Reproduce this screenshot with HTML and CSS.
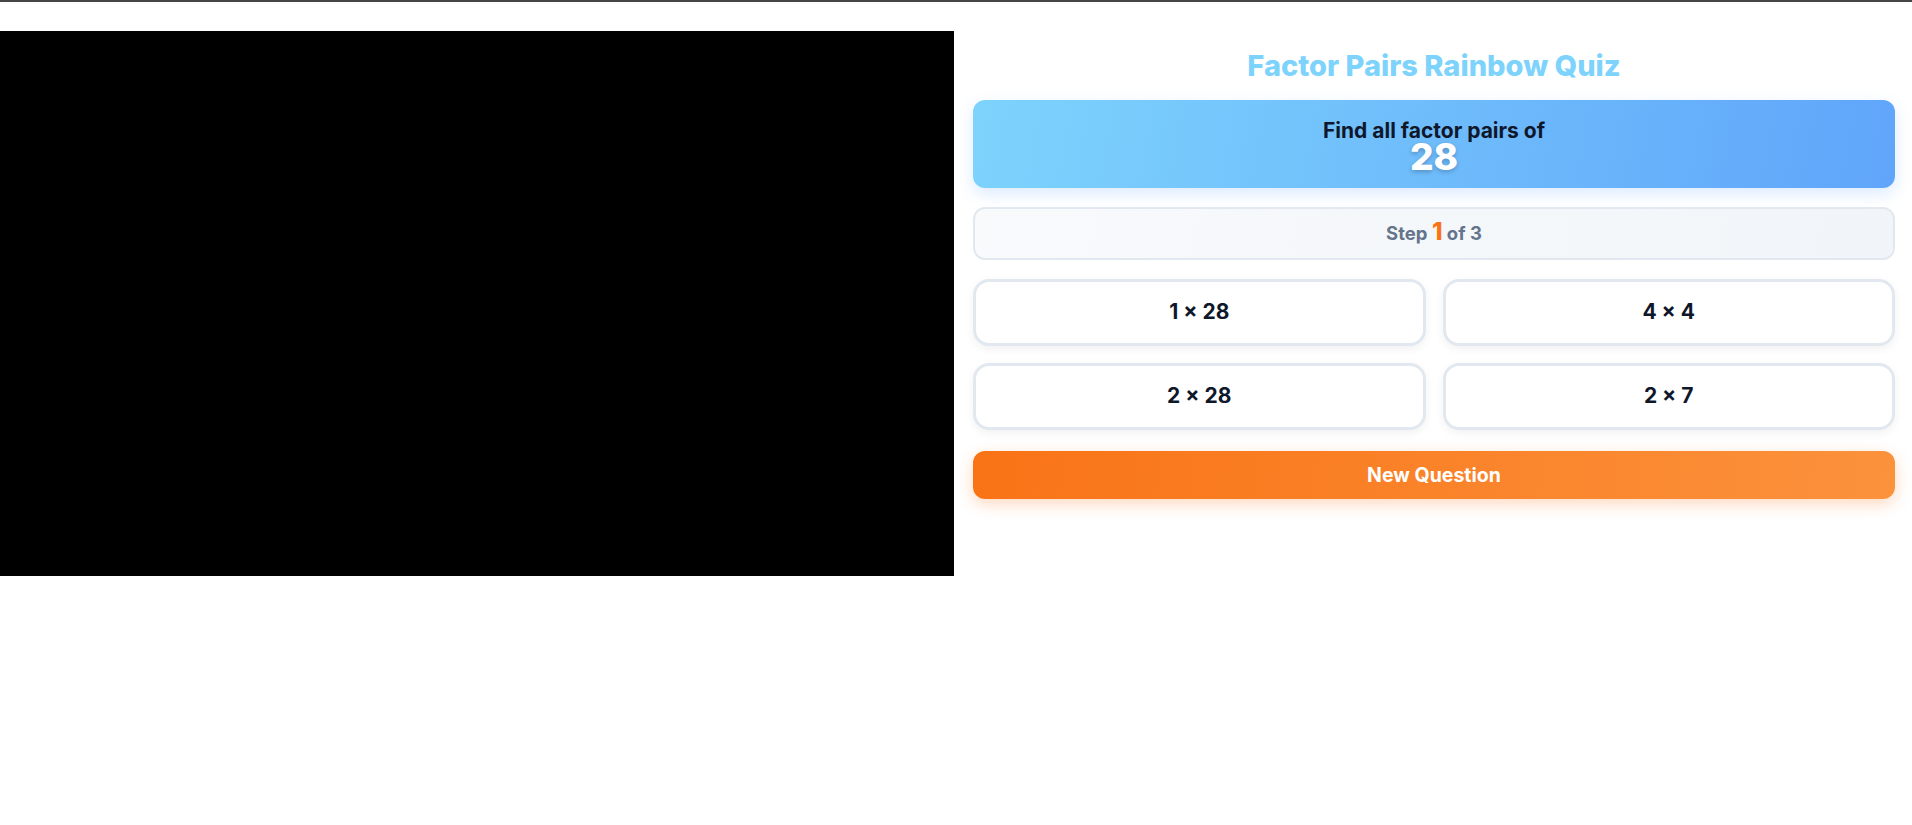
FILE: index.html
```html
<!DOCTYPE html>
<html lang="en">
<head>
<meta charset="utf-8">
<title>Factor Pairs Rainbow Quiz</title>
<link rel="stylesheet" href="styles.css">
</head>
<body>
<div class="topbar"></div>
<div class="app">
  <div class="stage"></div>
  <div class="panel">
    <h1 class="title">Factor Pairs Rainbow Quiz</h1>
    <div class="question">
      <div class="prompt">Find all factor pairs of</div>
      <div class="number">28</div>
    </div>
    <div class="step">Step <span class="step-num">1</span> of 3</div>
    <div class="options">
      <button class="option">1 × 28</button>
      <button class="option">4 × 4</button>
      <button class="option">2 × 28</button>
      <button class="option">2 × 7</button>
    </div>
    <button class="new-question">New Question</button>
  </div>
</div>
</body>
</html>
```

FILE: styles.css
```css
* {
  box-sizing: border-box;
}

html, body {
  margin: 0;
  padding: 0;
  background: #ffffff;
}

body {
  font-family: Inter, "Noto Sans", "Liberation Sans", sans-serif;
  color: #0f172a;
}

.topbar {
  height: 2px;
  background: #454545;
}

.app {
  display: flex;
  align-items: flex-start;
  padding-top: 29px;
}

.stage {
  width: 954px;
  height: 545px;
  flex: none;
  background: #000000;
}

.panel {
  flex: 1;
  display: flex;
  flex-direction: column;
  padding: 0 17px 0 19px;
}

.title {
  margin: 18px 0 16px;
  font-size: 29px;
  line-height: 1.2;
  font-weight: 800;
  text-align: center;
  color: #7dd3fc;
}

.question {
  display: flex;
  flex-direction: column;
  align-items: center;
  padding: 19px 16px 17px;
  margin-bottom: 19px;
  border-radius: 12px;
  background: linear-gradient(100deg, #7dd3fc 0%, #60a5fa 100%);
  box-shadow: 0 6px 16px rgba(96, 165, 250, 0.22);
}

.prompt {
  font-size: 21px;
  line-height: 24px;
  font-weight: 700;
  color: #0f172a;
}

.number {
  font-size: 37px;
  line-height: 28px;
  font-weight: 800;
  color: #ffffff;
  text-shadow: 0 2px 4px rgba(15, 23, 42, 0.25);
}

.step {
  padding: 11px 16px 12px;
  margin-bottom: 19px;
  border: 2px solid #e2e8f0;
  border-radius: 12px;
  background: linear-gradient(100deg, #f8fafc 0%, #f1f5f9 100%);
  text-align: center;
  font-size: 18.5px;
  line-height: 25px;
  font-weight: 700;
  color: #64748b;
}

.step-num {
  font-size: 24px;
  line-height: 1;
  font-weight: 800;
  color: #f97316;
}

.options {
  display: grid;
  grid-template-columns: 1fr 1fr;
  gap: 17px;
  margin-bottom: 21px;
}

.option {
  padding: 18.5px 12px;
  border: 3px solid #e2e8f0;
  border-radius: 16px;
  background: #ffffff;
  box-shadow: 0 3px 10px rgba(15, 23, 42, 0.06);
  font-family: inherit;
  font-size: 21px;
  line-height: 24px;
  font-weight: 700;
  color: #0f172a;
  text-align: center;
}

.new-question {
  padding: 12px 16px;
  border: none;
  border-radius: 12px;
  background: linear-gradient(100deg, #f97316 0%, #fb923c 100%);
  box-shadow: 0 5px 16px rgba(249, 115, 22, 0.28);
  font-family: inherit;
  font-size: 19.5px;
  line-height: 24px;
  font-weight: 700;
  color: #ffffff;
  text-align: center;
}
```
